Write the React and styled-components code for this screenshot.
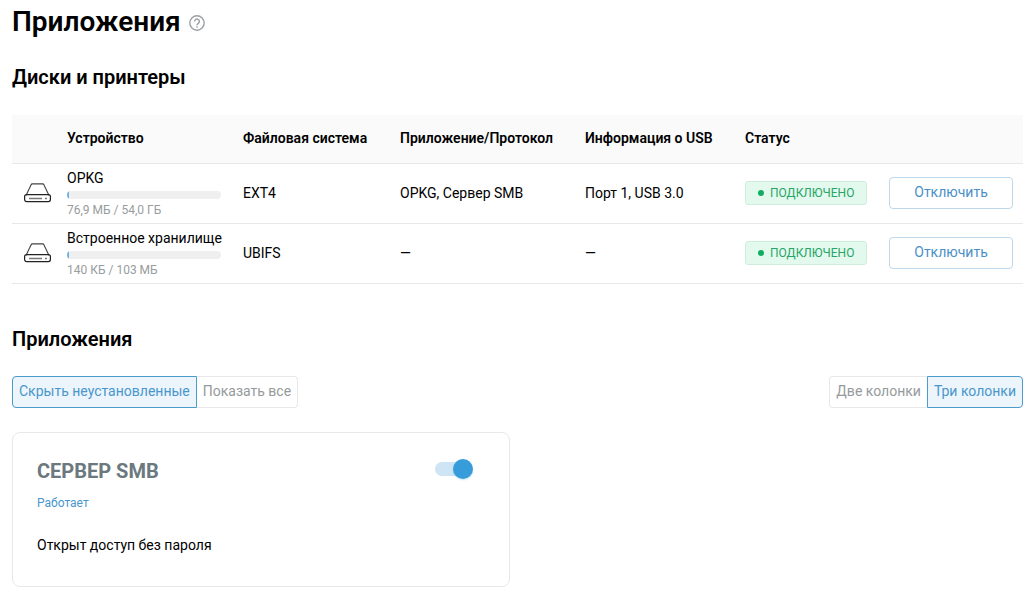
import React, { useState } from "react";
import styled, { createGlobalStyle } from "styled-components";

const GlobalStyle = createGlobalStyle`
  *, *::before, *::after { box-sizing: border-box; }
  body {
    margin: 0;
    background: #fff;
    color: #000;
    font: 400 14px/20px Roboto, "Noto Sans", sans-serif;
  }
  button { font: inherit; cursor: pointer; }
`;

const Page = styled.main`
  padding: 4px 12px 8px;
`;

const TitleBar = styled.header`
  display: flex;
  align-items: center;
  gap: 8px;
`;

const PageTitle = styled.h1`
  margin: 0;
  font-size: 28px;
  line-height: 36px;
  font-weight: 600;
`;

const HelpButton = styled.button`
  display: flex;
  padding: 0;
  border: 0;
  background: none;
  color: #9ba1a3;
  margin-top: 2px;
`;

const SectionTitle = styled.h2`
  margin: 0;
  padding: 24px 0;
  font-size: 20px;
  line-height: 26px;
  font-weight: 600;
`;

const DeviceTable = styled.table`
  width: 100%;
  table-layout: fixed;
  border-collapse: separate;
  border-spacing: 0;
  margin: 1px 0 18px;
`;

const Column = styled.col`
  width: ${(p) => p.$width}px;
`;

const HeadCell = styled.th`
  height: 49px;
  padding: 0 0 2px;
  background: #fafafa;
  border-bottom: 1px solid #e8e8e8;
  font-weight: 600;
  text-align: left;
  white-space: nowrap;
`;

const Cell = styled.td`
  height: 60px;
  padding: 0 0 2px ${(p) => (p.$inset ? 12 : 0)}px;
  border-bottom: 1px solid #e8e8e8;
  white-space: nowrap;
`;

const DriveSvg = styled.svg`
  display: block;
`;

const Device = styled.div`
  display: flex;
  flex-direction: column;
  width: 154px;
`;

const DeviceName = styled.span`
  line-height: 20px;
`;

const UsageBar = styled.div`
  height: 8px;
  margin: 3px 0;
  border-radius: 4px;
  background: #efefef;
  overflow: hidden;
`;

const UsageFill = styled.div`
  height: 100%;
  min-width: 2px;
  background: #6fb4e2;
`;

const UsageText = styled.span`
  font-size: 12px;
  line-height: 16px;
  color: #979c9e;
`;

const StatusBadge = styled.span`
  display: inline-flex;
  align-items: center;
  gap: 6px;
  height: 24px;
  padding: 0 12px;
  border: 1px solid #cdeedd;
  border-radius: 3px;
  background: #e4f9ee;
  color: #27a567;
  font-size: 12px;
  vertical-align: middle;
`;

const StatusDot = styled.span`
  width: 6px;
  height: 6px;
  border-radius: 50%;
  background: #10ad60;
`;

const OutlineButton = styled.button`
  display: block;
  width: 124px;
  height: 32px;
  padding: 0 0 2px;
  border: 1px solid #bcd8ea;
  border-radius: 4px;
  background: #fff;
  color: #4a90c8;
`;

const Toolbar = styled.div`
  display: flex;
  justify-content: space-between;
  margin-bottom: 24px;
`;

const Segments = styled.div`
  display: flex;
`;

const Segment = styled.button`
  height: 32px;
  padding: 0 6px 2px;
  border: 1px solid ${(p) => (p.$active ? "#4d9bcb" : "#e8e8e8")};
  background: ${(p) => (p.$active ? "#ebf5fb" : "#fff")};
  color: ${(p) => (p.$active ? "#4a96cc" : "#959a9c")};
  white-space: nowrap;

  &:first-child {
    border-radius: 4px 0 0 4px;
    ${(p) => !p.$active && "border-right: 0;"}
  }
  &:last-child {
    border-radius: 0 4px 4px 0;
    ${(p) => !p.$active && "border-left: 0;"}
  }
`;

const CardGrid = styled.div`
  display: grid;
  grid-template-columns: 1fr 1fr;
  gap: 16px;
`;

const Card = styled.article`
  padding: 24px;
  border: 1px solid #e8e8e8;
  border-radius: 8px;
`;

const CardHeader = styled.div`
  display: flex;
  align-items: center;
  justify-content: space-between;
  padding: 0 12px 0 0;
`;

const CardTitle = styled.h3`
  margin: 0;
  font-size: 20px;
  line-height: 28px;
  font-weight: 700;
  color: #6b787e;
`;

const Switch = styled.input`
  appearance: none;
  display: grid;
  align-items: center;
  width: 38px;
  height: 20px;
  margin: 0 0 4px;
  cursor: pointer;

  &::before,
  &::after {
    content: "";
    grid-area: 1 / 1;
  }
  &::before {
    width: 36px;
    height: 14px;
    border-radius: 7px;
    background: #e0e0e0;
  }
  &::after {
    width: 20px;
    height: 20px;
    border-radius: 50%;
    background: #b5b9bb;
    box-shadow: 0 1px 2px rgba(55, 157, 218, 0.25);
  }
  &:checked::before { background: #cde5f4; }
  &:checked::after {
    justify-self: end;
    background: #379dda;
  }
`;

const CardState = styled.p`
  margin: 10px 0 24px;
  font-size: 12px;
  line-height: 16px;
  color: #4a96cc;
`;

const CardText = styled.p`
  margin: 0 0 7px;
`;

function DriveIcon() {
  return (
    <DriveSvg width="28" height="20" viewBox="0 0 28 20" fill="none" aria-hidden="true">
      <path d="M2 12.5 7 2" stroke="#444" strokeWidth="1.1" />
      <path d="M20 2 25 12.5" stroke="#444" strokeWidth="1.1" />
      <path d="M7 2Q7.4.9 8.4.9h10.2q1 0 1.4 1.1" stroke="#444" strokeWidth="1.2" />
      <rect x=".6" y="11.6" width="25.8" height="7" rx="2" stroke="#222" strokeWidth="1.2" />
      <path d="M5 15.5h13M21 15.5h2" stroke="#777" strokeWidth="1.6" />
    </DriveSvg>
  );
}

function HelpIcon() {
  return (
    <svg width="16" height="16" viewBox="0 0 16 16" fill="none" stroke="currentColor" strokeWidth="1.4" aria-hidden="true">
      <circle cx="8" cy="8" r="7.2" />
      <path d="M5.6 6.4a2.4 2.4 0 1 1 3.7 2C8.5 9 8 9.3 8 10.3" />
      <path d="M8 11.2v1.5" />
    </svg>
  );
}

const columnWidths = [55, 176, 157, 185, 160, 144, 134];

const devices = [
  { name: "OPKG", used: 0.14, usage: "76,9 МБ / 54,0 ГБ", fs: "EXT4", app: "OPKG, Сервер SMB", usb: "Порт 1, USB 3.0" },
  { name: "Встроенное хранилище", used: 0.13, usage: "140 КБ / 103 МБ", fs: "UBIFS", app: "—", usb: "—" },
];

function SegmentedControl({ label, options, initial }) {
  const [selected, setSelected] = useState(initial);
  return (
    <Segments role="group" aria-label={label}>
      {options.map((option, i) => (
        <Segment key={option} type="button" $active={i === selected} aria-pressed={i === selected} onClick={() => setSelected(i)}>
          {option}
        </Segment>
      ))}
    </Segments>
  );
}

function DeviceRow({ device }) {
  return (
    <tr>
      <Cell $inset><DriveIcon /></Cell>
      <Cell>
        <Device>
          <DeviceName>{device.name}</DeviceName>
          <UsageBar><UsageFill style={{ width: `${device.used}%` }} /></UsageBar>
          <UsageText>{device.usage}</UsageText>
        </Device>
      </Cell>
      <Cell>{device.fs}</Cell>
      <Cell>{device.app}</Cell>
      <Cell>{device.usb}</Cell>
      <Cell><StatusBadge><StatusDot />ПОДКЛЮЧЕНО</StatusBadge></Cell>
      <Cell><OutlineButton type="button">Отключить</OutlineButton></Cell>
    </tr>
  );
}

export default function App() {
  const [enabled, setEnabled] = useState(true);
  return (
    <>
      <GlobalStyle />
      <Page>
        <TitleBar>
          <PageTitle>Приложения</PageTitle>
          <HelpButton type="button" aria-label="Справка"><HelpIcon /></HelpButton>
        </TitleBar>
        <SectionTitle>Диски и принтеры</SectionTitle>
        <DeviceTable>
          <colgroup>
            {columnWidths.map((width, i) => <Column key={i} $width={width} />)}
          </colgroup>
          <thead>
            <tr>
              <HeadCell />
              <HeadCell scope="col">Устройство</HeadCell>
              <HeadCell scope="col">Файловая система</HeadCell>
              <HeadCell scope="col">Приложение/Протокол</HeadCell>
              <HeadCell scope="col">Информация о USB</HeadCell>
              <HeadCell scope="col">Статус</HeadCell>
              <HeadCell />
            </tr>
          </thead>
          <tbody>
            {devices.map((device) => <DeviceRow key={device.name} device={device} />)}
          </tbody>
        </DeviceTable>
        <SectionTitle>Приложения</SectionTitle>
        <Toolbar>
          <SegmentedControl label="Фильтр приложений" options={["Скрыть неустановленные", "Показать все"]} initial={0} />
          <SegmentedControl label="Число колонок" options={["Две колонки", "Три колонки"]} initial={1} />
        </Toolbar>
        <CardGrid>
          <Card>
            <CardHeader>
              <CardTitle><label htmlFor="smb">СЕРВЕР SMB</label></CardTitle>
              <Switch id="smb" type="checkbox" role="switch" checked={enabled} onChange={(e) => setEnabled(e.target.checked)} />
            </CardHeader>
            <CardState>Работает</CardState>
            <CardText>Открыт доступ без пароля</CardText>
          </Card>
        </CardGrid>
      </Page>
    </>
  );
}
